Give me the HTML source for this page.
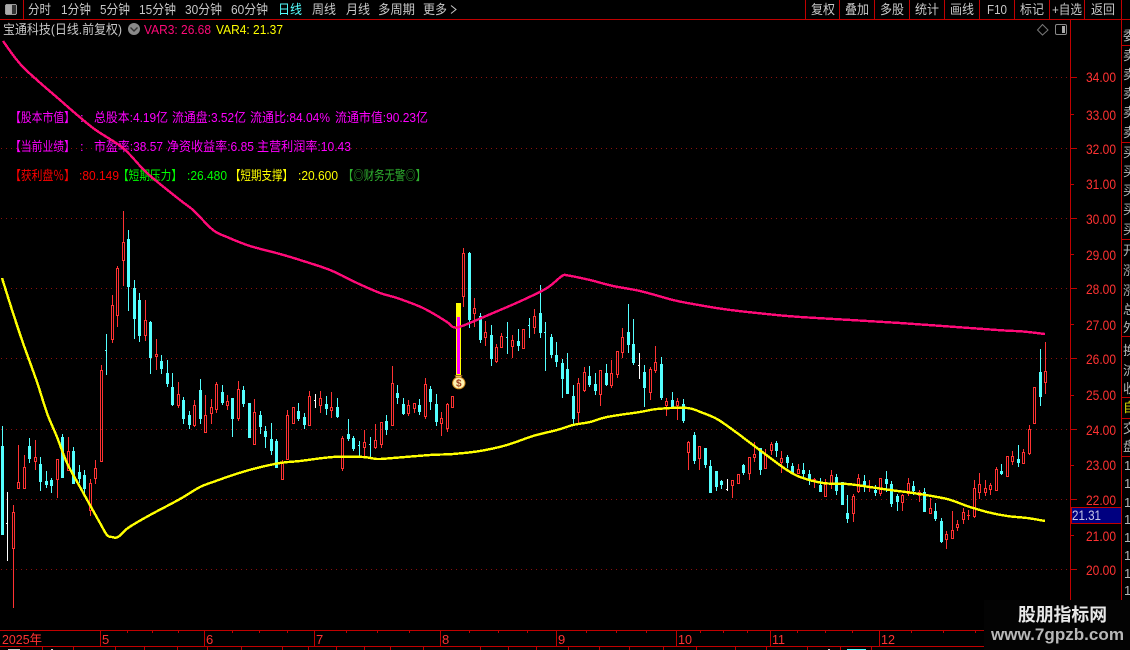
<!DOCTYPE html>
<html lang="zh-CN">
<head>
<meta charset="utf-8">
<title>宝通科技 日线</title>
<style>
html,body{margin:0;padding:0;background:#000;width:1130px;height:650px;overflow:hidden}
svg{display:block;position:absolute;left:0;top:0}
text{font-family:"Liberation Sans","WenQuanYi Zen Hei","Noto Sans CJK SC",sans-serif;font-size:13px;white-space:pre}
.t text{fill:#c8c8c8;font-size:13px}
.ax text{fill:#ff3232;font-size:14px}
.rc text{fill:#b4b4b4;font-size:13px}
.m text{font-size:13px}
.m .b{font-family:"Noto Sans CJK SC",sans-serif}
.tl text{fill:#ff3232;font-size:13px}
</style>
</head>
<body>
<svg width="1130" height="650" viewBox="0 0 1130 650" xmlns="http://www.w3.org/2000/svg">
<!-- grid -->
<g stroke="#8c1010" stroke-width="1" stroke-dasharray="1 4" shape-rendering="crispEdges">
<line x1="1" y1="77.5" x2="1070" y2="77.5"/>
<line x1="1" y1="148.5" x2="1070" y2="148.5"/>
<line x1="1" y1="218.5" x2="1070" y2="218.5"/>
<line x1="1" y1="288.5" x2="1070" y2="288.5"/>
<line x1="1" y1="358.5" x2="1070" y2="358.5"/>
<line x1="1" y1="429.5" x2="1070" y2="429.5"/>
<line x1="1" y1="499.5" x2="1070" y2="499.5"/>
<line x1="1" y1="569.5" x2="1070" y2="569.5"/>
</g>
<!-- frame lines -->
<g stroke="#c00000" stroke-width="1" shape-rendering="crispEdges" fill="none">
<line x1="0" y1="19.5" x2="1130" y2="19.5"/>
<line x1="23.5" y1="0" x2="23.5" y2="19"/>
<line x1="805.5" y1="0" x2="805.5" y2="19"/>
<line x1="839.5" y1="0" x2="839.5" y2="19"/>
<line x1="874.5" y1="0" x2="874.5" y2="19"/>
<line x1="909.5" y1="0" x2="909.5" y2="19"/>
<line x1="944.5" y1="0" x2="944.5" y2="19"/>
<line x1="979.5" y1="0" x2="979.5" y2="19"/>
<line x1="1014.5" y1="0" x2="1014.5" y2="19"/>
<line x1="1049.5" y1="0" x2="1049.5" y2="19"/>
<line x1="1084.5" y1="0" x2="1084.5" y2="19"/>
<line x1="1121.5" y1="0" x2="1121.5" y2="19"/>
<line x1="1070.5" y1="20" x2="1070.5" y2="600"/>
<line x1="1121.5" y1="20" x2="1121.5" y2="600"/>
<line x1="1122" y1="45.5" x2="1130" y2="45.5"/>
<line x1="1122" y1="142.5" x2="1130" y2="142.5"/>
<line x1="1122" y1="239.5" x2="1130" y2="239.5"/>
<line x1="1122" y1="336.5" x2="1130" y2="336.5"/>
<line x1="1122" y1="397.5" x2="1130" y2="397.5"/>
<line x1="1122" y1="418.5" x2="1130" y2="418.5"/>
<line x1="1122" y1="456.5" x2="1130" y2="456.5"/>
<!-- axis ticks -->
<path d="M1071 77.5H1077M1071 114.5H1074M1071 148.5H1077M1071 184.5H1074M1071 218.5H1077M1071 254.5H1074M1071 288.5H1077M1071 324.5H1074M1071 358.5H1077M1071 395.5H1074M1071 429.5H1077M1071 465.5H1074M1071 499.5H1077M1071 535.5H1074M1071 569.5H1077"/>
<!-- timeline -->
<line x1="0" y1="630.5" x2="1130" y2="630.5"/>
<line x1="0" y1="646.5" x2="1130" y2="646.5"/>
<path d="M100.5 630V646M204.5 630V646M314.5 630V646M440.5 630V646M556.5 630V646M676.5 630V646M770.5 630V646M879.5 630V646"/>
<path d="M127.5 631V633M152.5 631V633M178.5 631V633M232.5 631V633M259.5 631V633M287.5 631V633M346.5 631V633M377.5 631V633M409.5 631V633M469.5 631V633M498.5 631V633M527.5 631V633M586.5 631V633M616.5 631V633M646.5 631V633M700.5 631V633M723.5 631V633M747.5 631V633M797.5 631V633M825.5 631V633M852.5 631V633M911.5 631V633M943.5 631V633M975.5 631V633"/>
<path d="M42.5 647V650M73.5 647V650M115.5 647V650M144.5 647V650M177.5 647V650M207.5 647V650M241.5 647V650M282.5 647V650M308.5 647V650M336.5 647V650M364.5 647V650M390.5 647V650M423.5 647V650M480.5 647V650M508.5 647V650M536.5 647V650M568.5 647V650M599.5 647V650M629.5 647V650M663.5 647V650M696.5 647V650M735.5 647V650M766.5 647V650M807.5 647V650M840.5 647V650M871.5 647V650"/>
</g>
<!-- toolbar -->
<g class="t">
<text x="28" y="14" textLength="23" lengthAdjust="spacingAndGlyphs">分时</text>
<text x="61" y="14" textLength="30" lengthAdjust="spacingAndGlyphs">1分钟</text>
<text x="100" y="14" textLength="30" lengthAdjust="spacingAndGlyphs">5分钟</text>
<text x="139" y="14" textLength="37" lengthAdjust="spacingAndGlyphs">15分钟</text>
<text x="185" y="14" textLength="37" lengthAdjust="spacingAndGlyphs">30分钟</text>
<text x="231" y="14" textLength="37" lengthAdjust="spacingAndGlyphs">60分钟</text>
<text x="278" y="14" textLength="24" lengthAdjust="spacingAndGlyphs" style="fill:#54ffff">日线</text>
<text x="312" y="14" textLength="24" lengthAdjust="spacingAndGlyphs">周线</text>
<text x="346" y="14" textLength="24" lengthAdjust="spacingAndGlyphs">月线</text>
<text x="378" y="14" textLength="37" lengthAdjust="spacingAndGlyphs">多周期</text>
<text x="423" y="14" textLength="24" lengthAdjust="spacingAndGlyphs">更多</text>
<text x="811" y="14" textLength="24" lengthAdjust="spacingAndGlyphs">复权</text>
<text x="845" y="14" textLength="24" lengthAdjust="spacingAndGlyphs">叠加</text>
<text x="880" y="14" textLength="24" lengthAdjust="spacingAndGlyphs">多股</text>
<text x="915" y="14" textLength="24" lengthAdjust="spacingAndGlyphs">统计</text>
<text x="950" y="14" textLength="24" lengthAdjust="spacingAndGlyphs">画线</text>
<text x="987" y="14" textLength="20" lengthAdjust="spacingAndGlyphs">F10</text>
<text x="1020" y="14" textLength="24" lengthAdjust="spacingAndGlyphs">标记</text>
<text x="1052" y="14" textLength="30" lengthAdjust="spacingAndGlyphs">+自选</text>
<text x="1091" y="14" textLength="24" lengthAdjust="spacingAndGlyphs">返回</text>
</g>
<path d="M451 5.5L456 9.5L451 13.5" fill="none" stroke="#c8c8c8" stroke-width="1"/>
<!-- toolbar icon -->
<g shape-rendering="crispEdges">
<rect x="5.5" y="4.5" width="11" height="10" rx="1.5" fill="#333" stroke="#9a9a9a"/>
<rect x="6" y="5" width="6" height="9" fill="#aaa"/>
</g>
<!-- header -->
<text x="3" y="34" fill="#c8c8c8" textLength="119" lengthAdjust="spacingAndGlyphs" style="font-size:13px">宝通科技(日线.前复权)</text>
<circle cx="134" cy="29" r="6" fill="#8a8a8a"/>
<path d="M130.5 27.5L134 31L137.5 27.5" fill="none" stroke="#333" stroke-width="1.4"/>
<text x="144" y="34" fill="#ff0a78" textLength="67" lengthAdjust="spacingAndGlyphs" style="font-size:13px">VAR3: 26.68</text>
<text x="216" y="34" fill="#ffff00" textLength="67" lengthAdjust="spacingAndGlyphs" style="font-size:13px">VAR4: 21.37</text>
<path d="M1042.5 24.5L1048 30L1042.5 35L1037.5 30Z" fill="none" stroke="#777" stroke-width="1"/>
<rect x="1055.5" y="24.5" width="11" height="10" rx="1.5" fill="#000" stroke="#888"/>
<rect x="1062" y="26" width="3" height="7" fill="#aaa"/>
<!-- magenta info -->
<g class="m">
<g fill="#ff00ff">
<text x="10" y="122" textLength="65" lengthAdjust="spacingAndGlyphs"><tspan class="b">【</tspan>股本市值<tspan class="b">】</tspan></text>
<text x="80" y="122">:</text>
<text x="94" y="122" textLength="74" lengthAdjust="spacingAndGlyphs">总股本:4.19亿</text>
<text x="172" y="122" textLength="74" lengthAdjust="spacingAndGlyphs">流通盘:3.52亿</text>
<text x="250" y="122" textLength="80" lengthAdjust="spacingAndGlyphs">流通比:84.04%</text>
<text x="335" y="122" textLength="93" lengthAdjust="spacingAndGlyphs">流通市值:90.23亿</text>
<text x="10" y="151" textLength="65" lengthAdjust="spacingAndGlyphs"><tspan class="b">【</tspan>当前业绩<tspan class="b">】</tspan></text>
<text x="80" y="151">:</text>
<text x="94" y="151" textLength="69" lengthAdjust="spacingAndGlyphs">市盈率:38.57</text>
<text x="167" y="151" textLength="87" lengthAdjust="spacingAndGlyphs">净资收益率:6.85</text>
<text x="257" y="151" textLength="94" lengthAdjust="spacingAndGlyphs">主营利润率:10.43</text>
</g>
<g fill="#ff0000">
<text x="10" y="180" textLength="65" lengthAdjust="spacingAndGlyphs"><tspan class="b">【</tspan>获利盘％<tspan class="b">】</tspan></text>
<text x="79" y="180" textLength="40" lengthAdjust="spacingAndGlyphs">:80.149</text>
</g>
<g fill="#00ff00">
<text x="118" y="180" textLength="64" lengthAdjust="spacingAndGlyphs"><tspan class="b">【</tspan>短期压力<tspan class="b">】</tspan></text>
<text x="187" y="180" textLength="40" lengthAdjust="spacingAndGlyphs">:26.480</text>
</g>
<g fill="#ffff00">
<text x="230" y="180" textLength="63" lengthAdjust="spacingAndGlyphs"><tspan class="b">【</tspan>短期支撑<tspan class="b">】</tspan></text>
<text x="298" y="180" textLength="40" lengthAdjust="spacingAndGlyphs">:20.600</text>
</g>
<text x="343" y="180" fill="#2fb02f" textLength="83" lengthAdjust="spacingAndGlyphs"><tspan class="b">【</tspan>◎财务无警◎<tspan class="b">】</tspan></text>
</g>
<!-- candles -->
<g id="candles" shape-rendering="crispEdges"></g>
<!-- signal bar -->
<g shape-rendering="crispEdges">
<rect x="456" y="303" width="5" height="72" fill="#ffff00"/>
<rect x="457" y="317" width="3" height="57" fill="#ff00ff"/>
</g>
<!-- curves -->
<path id="v3" fill="none" stroke="#ff0a78" stroke-width="2.4" stroke-linejoin="round" shape-rendering="crispEdges" d="M3 41L23 67L60 100L93 128L123 148L147 173L180 200L193 210L213 230L227 237L250 246L280 254L300 260L330 270L357 283L380 293L397 298L423 308L447 322L453 327L462 326L493 313L523 300L547 288L562 276L568 275.5L590 280L613 286L640 291L673 300L693 304L723 309L757 313L800 317L900 323L997 330L1023 331.5L1045 334"/>
<path id="v4" fill="none" stroke="#ffff00" stroke-width="2.4" stroke-linejoin="round" shape-rendering="crispEdges" d="M2 278L13 313L23 343L37 382L47 413L57 437L67 463L80 487L100 523L107 535L112 537L118 537L128 528L150 515L180 499L200 487L213 482L233 475L253 469L280 463L300 461L333 457L363 457L377 459L393 458L430 455L453 454L480 451L507 445L533 436L557 430L573 425L590 422L607 417L640 412L657 409L687 408L703 413L717 419L733 430L753 445L773 460L787 470L800 477L823 483L847 484L863 486L890 490L913 493L947 499L967 506L987 512L1007 516L1027 518L1045 521"/>
<!-- money bag -->
<path d="M455 375.5h7l-1.5 2.5h-4z" fill="#f0d060" stroke="#a06020" stroke-width=".7"/>
<ellipse cx="458.8" cy="383" rx="6.2" ry="5.8" fill="#fff2b0" stroke="#d08a20" stroke-width="1"/>
<text x="458.8" y="386.5" text-anchor="middle" fill="#a04020" style="font-size:10px;font-weight:bold">$</text>
<!-- axis labels -->
<g class="ax">
<text x="1086" y="82" textLength="30" lengthAdjust="spacingAndGlyphs">34.00</text>
<text x="1086" y="120" textLength="30" lengthAdjust="spacingAndGlyphs">33.00</text>
<text x="1086" y="154" textLength="30" lengthAdjust="spacingAndGlyphs">32.00</text>
<text x="1086" y="189" textLength="30" lengthAdjust="spacingAndGlyphs">31.00</text>
<text x="1086" y="224" textLength="30" lengthAdjust="spacingAndGlyphs">30.00</text>
<text x="1086" y="260" textLength="30" lengthAdjust="spacingAndGlyphs">29.00</text>
<text x="1086" y="294" textLength="30" lengthAdjust="spacingAndGlyphs">28.00</text>
<text x="1086" y="330" textLength="30" lengthAdjust="spacingAndGlyphs">27.00</text>
<text x="1086" y="364" textLength="30" lengthAdjust="spacingAndGlyphs">26.00</text>
<text x="1086" y="400" textLength="30" lengthAdjust="spacingAndGlyphs">25.00</text>
<text x="1086" y="435" textLength="30" lengthAdjust="spacingAndGlyphs">24.00</text>
<text x="1086" y="470" textLength="30" lengthAdjust="spacingAndGlyphs">23.00</text>
<text x="1086" y="505" textLength="30" lengthAdjust="spacingAndGlyphs">22.00</text>
<text x="1086" y="541" textLength="30" lengthAdjust="spacingAndGlyphs">21.00</text>
<text x="1086" y="575" textLength="30" lengthAdjust="spacingAndGlyphs">20.00</text>
</g>
<rect x="1071.5" y="507.5" width="50" height="16" fill="#000080" stroke="#c00000" shape-rendering="crispEdges"/>
<text x="1072" y="520" fill="#c8c8e8" textLength="29" lengthAdjust="spacingAndGlyphs" style="font-size:14px">21.31</text>
<!-- right strip -->
<g class="rc">
<text x="1123" y="40">委</text>
<text x="1123" y="60">卖</text><text x="1123" y="79">卖</text><text x="1123" y="98">卖</text><text x="1123" y="117">卖</text><text x="1123" y="137">卖</text>
<text x="1123" y="157">买</text><text x="1123" y="176">买</text><text x="1123" y="195">买</text><text x="1123" y="214">买</text><text x="1123" y="234">买</text>
<text x="1123" y="255">开</text><text x="1123" y="275">涨</text><text x="1123" y="295">涨</text><text x="1123" y="314">总</text><text x="1123" y="332">外</text>
<text x="1123" y="355">换</text><text x="1123" y="375">流</text><text x="1123" y="393">收</text>
<text x="1123" y="412" style="fill:#d8d800">自</text>
<text x="1123" y="433">交</text><text x="1123" y="451">盘</text>
<text x="1124" y="470">1</text><text x="1124" y="488">1</text><text x="1124" y="507">1</text><text x="1124" y="524">1</text><text x="1124" y="542">1</text><text x="1124" y="560">1</text><text x="1124" y="578">1</text><text x="1124" y="595">1</text>
</g>
<!-- timeline labels -->
<g class="tl">
<text x="2" y="644" textLength="40" lengthAdjust="spacingAndGlyphs">2025年</text>
<text x="102" y="644">5</text><text x="206" y="644">6</text><text x="316" y="644">7</text><text x="442" y="644">8</text><text x="558" y="644">9</text>
<text x="678" y="644" textLength="14" lengthAdjust="spacingAndGlyphs">10</text>
<text x="772" y="644" textLength="13" lengthAdjust="spacingAndGlyphs">11</text>
<text x="881" y="644" textLength="14" lengthAdjust="spacingAndGlyphs">12</text>
</g>
<g shape-rendering="crispEdges">
<rect x="8" y="649" width="12" height="1" fill="#ccc"/><rect x="51" y="649" width="2" height="1" fill="#ccc"/>
<rect x="828" y="649" width="2" height="1" fill="#ccc"/><rect x="847" y="649" width="19" height="1" fill="#54ffff"/>
</g>
<!-- watermark -->
<rect x="984" y="600" width="146" height="50" fill="#030303"/>
<text x="1018" y="621" fill="#e8e8e8" textLength="89" lengthAdjust="spacingAndGlyphs" style="font-size:18px;font-weight:bold;font-family:'Noto Sans CJK SC',sans-serif">股朋指标网</text>
<text x="991" y="640" fill="#b8b8b8" textLength="133" lengthAdjust="spacingAndGlyphs" style="font-size:17px;font-weight:bold">www.7gpzb.com</text>
<script>
//<![CDATA[
(function(){
var d="c 426 446 534 534,w 492 523 523 560,r 505 512 548 607,r 445 482 488 488,r 455 467 488 488,c 438 446 458 462,r 440 457 461 469,c 457 464 481 490,c 471 481 484 487,c 478 480 485 492,r 459 459 479 497,c 434 437 477 477,r 437 451 470 470,c 447 451 483 483,c 465 472 478 482,c 470 475 488 494,r 479 483 510 515,r 460 468 478 483,r 365 370 461 461,c 334 350 350 374,r 295 305 339 342,r 266 268 315 326,r 211 242 260 285,c 230 239 286 310,c 280 288 318 338,c 293 300 335 341,r 300 320 335 340,c 321 322 357 373,r 339 354 356 369,c 355 361 368 373,c 360 373 383 386,c 373 387 404 405,r 382 394 405 407,c 397 400 418 423,c 411 415 424 428,r 400 405 425 426,c 379 390 418 423,r 395 415 432 432,r 399 407 413 423,r 382 384 409 412,c 385 392 402 404,r 395 401 405 409,c 398 398 418 436,r 381 389 418 420,c 386 390 403 406,c 403 403 437 437,r 399 412 444 444,c 411 415 426 433,c 426 431 436 447,c 423 439 450 454,c 439 441 467 467,r 460 463 479 479,r 410 415 459 459,r 407 407 423 423,c 403 411 418 420,c 413 417 424 428,r 391 396 425 425,w 394 400 400 407,r 391 398 405 412,c 396 404 408 414,r 392 407 410 417,c 398 407 416 417,r 436 438 468 470,c 419 434 438 440,c 436 438 448 450,c 441 445 445 457,r 430 442 447 457,c 437 444 444 457,r 424 440 447 448,r 422 422 444 447,c 415 421 429 434,r 366 383 425 425,c 385 393 397 403,c 398 404 413 414,r 400 405 413 415,r 403 403 408 412,c 399 405 411 414,r 378 384 416 418,c 386 389 401 409,c 394 404 421 425,r 412 418 423 435,r 403 404 428 431,r 396 396 407 407,x 303 303 374 374,r 248 253 296 306,c 252 253 319 327,r 298 308 313 326,c 313 316 339 342,r 321 332 337 345,c 325 335 358 365,r 344 347 361 362,r 333 336 347 347,c 322 337 337 353,r 335 340 346 357,c 329 341 345 350,r 329 329 348 348,c 318 325 325 337,r 309 316 327 333,c 285 313 332 337,c 322 332 332 370,c 334 337 354 357,c 342 355 361 366,c 359 363 378 397,c 353 369 393 393,c 385 396 418 425,r 378 383 412 423,r 367 372 390 391,c 366 376 384 386,c 373 384 390 394,r 370 370 394 405,c 364 373 384 385,r 360 373 385 387,r 351 351 374 377,r 328 337 352 357,c 304 332 344 352,c 319 344 362 364,w 353 365 365 378,c 365 372 387 406,r 367 369 392 399,r 346 362 370 372,c 357 364 397 399,r 398 401 405 415,c 392 400 407 407,r 398 401 405 419,c 399 404 420 422,r 441 442 452 469,c 432 435 460 463,r 446 446 458 469,c 448 448 464 467,c 460 466 492 492,c 471 471 486 490,c 480 481 484 488,w 479 489 489 490,r 480 480 485 497,r 474 474 483 483,c 464 465 472 474,r 457 457 473 479,r 442 454 457 461,c 448 448 469 474,r 449 455 468 468,r 442 444 450 454,c 441 443 450 456,r 451 458 462 472,c 455 457 462 467,c 463 466 472 472,r 464 469 473 473,c 463 470 473 476,c 470 474 480 484,r 478 479 480 487,c 478 485 491 491,r 479 484 496 496,r 470 475 484 488,c 474 477 490 494,c 482 482 504 504,c 495 513 518 522,r 494 496 513 521,r 474 478 491 492,c 475 481 486 491,r 480 486 487 491,c 485 490 492 495,r 478 478 493 495,c 471 479 483 491,c 481 484 503 506,c 494 496 501 510,r 494 495 502 510,r 478 483 493 495,c 481 486 490 494,r 490 492 495 501,c 488 492 511 511,r 498 508 513 513,c 503 511 518 520,c 518 521 541 542,r 531 534 539 548,r 511 530 538 538,r 520 524 527 530,r 508 512 519 523,r 510 515 515 519,r 480 488 516 517,r 473 484 492 498,r 480 488 492 495,r 483 485 489 494,r 467 469 490 490,c 464 471 473 474,r 456 456 476 476,r 451 456 461 464,c 445 459 462 466,r 449 452 463 463,r 425 429 453 454,r 387 387 423 423,c 349 372 396 405,r 342 371 382 393".split(",");
var R="",C="",W="";
function rc(x,y,w,h){return "M"+x+" "+y+"h"+w+"v"+h+"h"+(-w)+"z";}
for(var n=0;n<d.length;n++){
 var p=d[n].split(" "),k=p[0],h=+p[1],t=+p[2],b=+p[3],l=+p[4];
 var c=Math.floor(2.4+5.49*n);
 if(k==="x")continue;
 if(k==="c"){
  C+=rc(c,h,1,l-h+1);
  if(b>t)C+=rc(c-1,t,3,b-t+1);else C+=rc(c-1,t,2,1);
 }else if(k==="w"){
  W+=rc(c,h,1,l-h+1)+rc(c-1,t,2,1);
 }else{
  if(t>h)R+=rc(c,h,1,t-h);
  if(l>b)R+=rc(c,b+1,1,l-b);
  if(b>t){
   R+=rc(c-1,t,3,1)+rc(c-1,b,3,1)+rc(c-1,t,1,b-t+1)+rc(c+1,t,1,b-t+1);
  }else{
   R+=rc(c-1,t,3,1);
  }
 }
}
document.getElementById("candles").innerHTML=
 '<path fill="#ff3232" d="'+R+'"/><path fill="#54ffff" d="'+C+'"/><path fill="#ffffff" d="'+W+'"/>';
function smooth(id){
 var e=document.getElementById(id),m=e.getAttribute("d").slice(1).split("L"),P=[],i;
 for(i=0;i<m.length;i++){var q=m[i].split(" ");P.push([+q[0],+q[1]]);}
 var s="M"+P[0][0]+" "+P[0][1];
 for(i=0;i<P.length-1;i++){
  var a=P[i>0?i-1:0],b0=P[i],c0=P[i+1],e0=P[i+2<P.length?i+2:i+1];
  s+="C"+(b0[0]+(c0[0]-a[0])/6).toFixed(1)+" "+(b0[1]+(c0[1]-a[1])/6).toFixed(1)+" "+(c0[0]-(e0[0]-b0[0])/6).toFixed(1)+" "+(c0[1]-(e0[1]-b0[1])/6).toFixed(1)+" "+c0[0]+" "+c0[1];
 }
 e.setAttribute("d",s);
}
smooth("v3");smooth("v4");
})();
//]]>
</script>
</svg>
</body>
</html>
